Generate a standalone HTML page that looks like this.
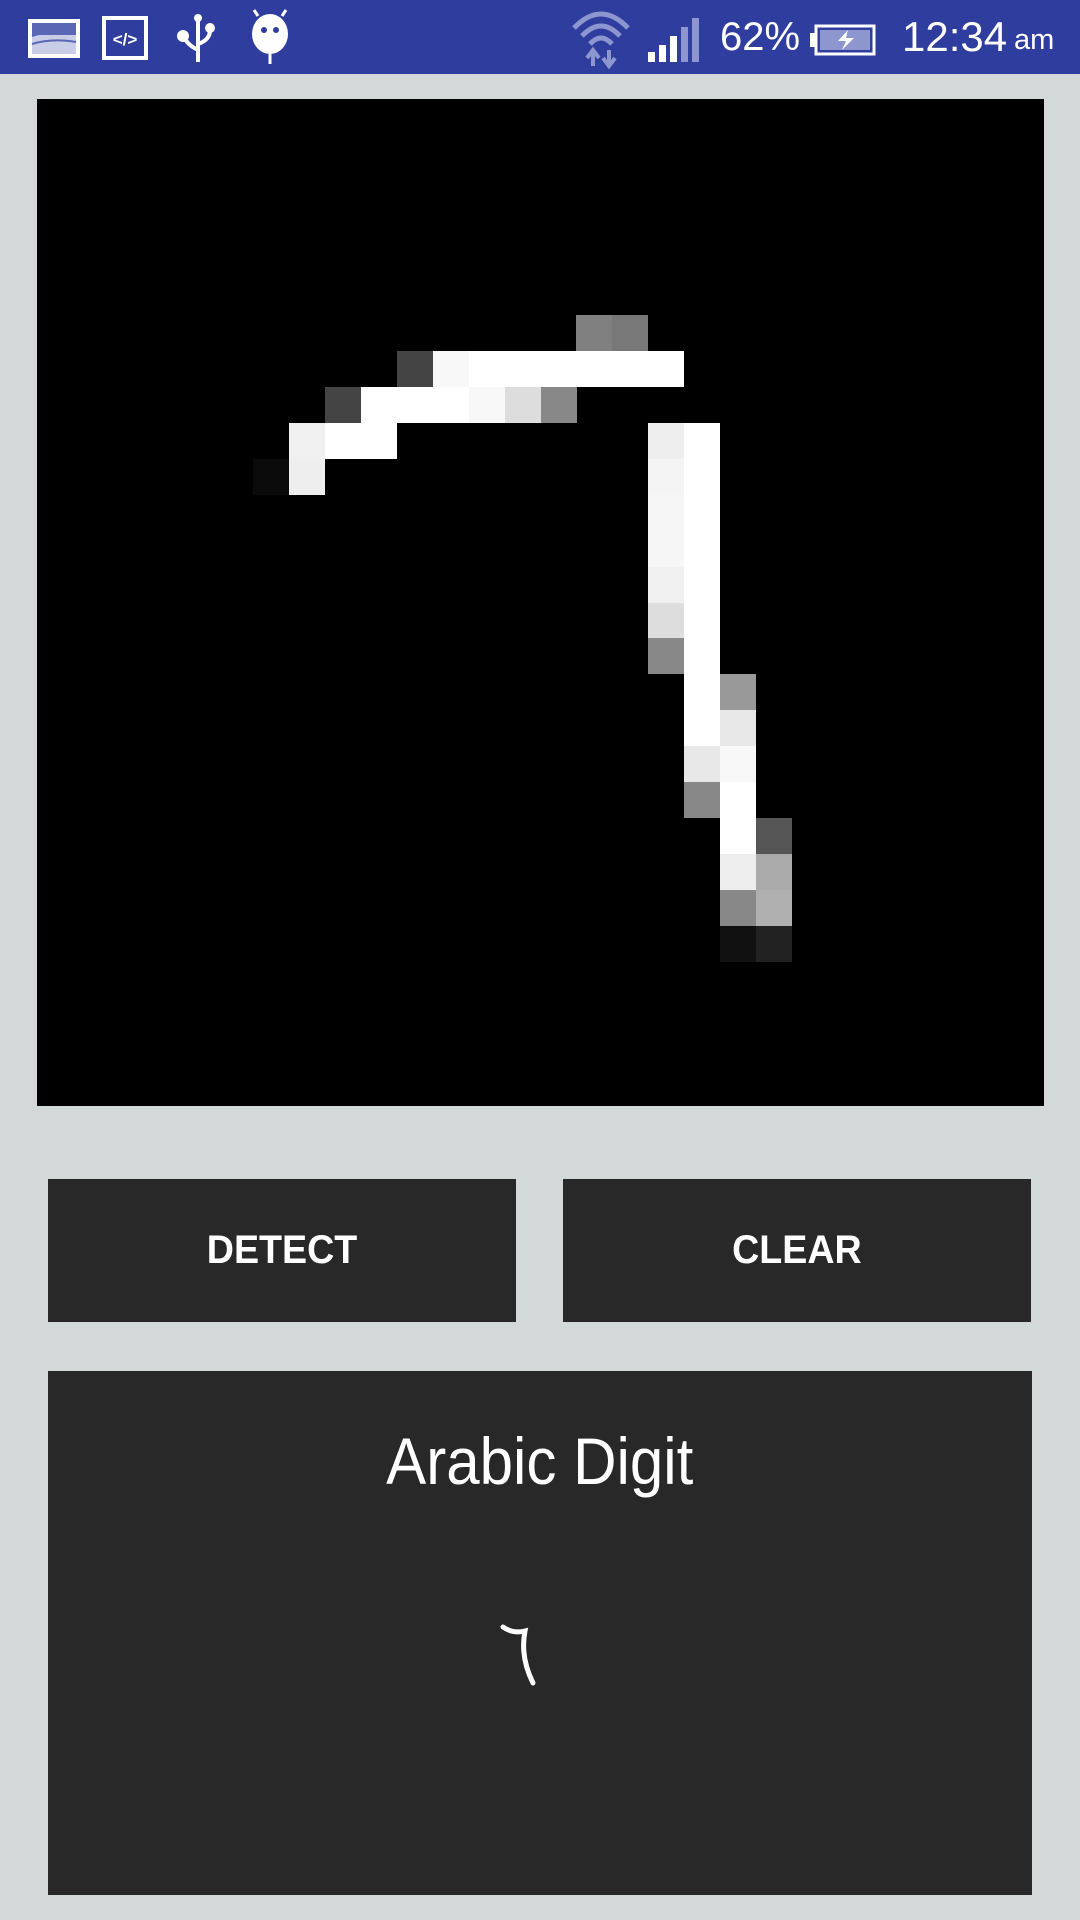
<!DOCTYPE html>
<html><head><meta charset="utf-8"><style>
*{margin:0;padding:0;box-sizing:border-box}
body{width:1080px;height:1920px;background:#d3d8d8;position:relative;overflow:hidden;font-family:"Liberation Sans","DejaVu Sans",sans-serif}
.sb{position:absolute;left:0;top:0;width:1080px;height:74px;background:#2f3e9e}
.canvas{position:absolute;left:37px;top:99px;width:1007px;height:1007px;background:#000}
.c{position:absolute;width:36px;height:36px}
.btn{position:absolute;top:1179px;height:143px;width:468px;background:#282828;color:#fff;font-weight:bold;font-size:40px;display:flex;align-items:center;justify-content:center}
.res{position:absolute;left:48px;top:1371px;width:984px;height:524px;background:#282828}
.t{position:absolute;color:#fff;white-space:nowrap}
</style></head><body>
<div class="sb">
<svg width="1080" height="74" style="position:absolute;left:0;top:0">
 <rect x="28" y="19" width="52" height="39" fill="#fff"/>
 <rect x="32" y="23" width="44" height="31" fill="#c9cde8"/>
 <rect x="32" y="23" width="44" height="12" fill="#5a67b5"/>
 <path d="M32 36 Q50 30 76 34 M32 44 Q52 38 76 42" stroke="#5a67b5" stroke-width="2" fill="none"/>
 <rect x="104" y="18" width="42" height="40" fill="none" stroke="#fff" stroke-width="4"/>
 <text x="125" y="45" fill="#fff" font-size="17" font-weight="bold" text-anchor="middle" font-family="Liberation Sans">&lt;/&gt;</text>
 <path d="M198 18 V62 M198 50 Q186 44 184 36 M198 44 Q210 40 210 30" stroke="#fff" stroke-width="4" fill="none"/>
 <circle cx="198" cy="18" r="4" fill="#fff"/><circle cx="183" cy="36" r="6" fill="#fff"/><circle cx="210" cy="28" r="5" fill="#fff"/>
 <ellipse cx="270" cy="34" rx="18" ry="20" fill="#fff"/>
 <path d="M258 16 L254 10 M282 16 L286 10 M270 54 V64" stroke="#fff" stroke-width="3"/>
 <circle cx="264" cy="30" r="3" fill="#2f3e9e"/><circle cx="276" cy="30" r="3" fill="#2f3e9e"/>
 <path d="M574 28 Q601 0 628 28 M582 36 Q601 16 620 36 M590 44 Q601 32 612 44" stroke="#8d96cf" stroke-width="5" fill="none"/>
 <path d="M593 66 V52 M587 58 L593 50 L599 58 M609 50 V64 M603 58 L609 66 L615 58" stroke="#8d96cf" stroke-width="4" fill="none"/>
 <rect x="648" y="52" width="7" height="10" fill="#fff"/><rect x="659" y="45" width="7" height="17" fill="#fff"/><rect x="670" y="36" width="7" height="26" fill="#fff"/><rect x="681" y="27" width="7" height="35" fill="#8d96cf"/><rect x="692" y="18" width="7" height="44" fill="#8d96cf"/>
 <rect x="816" y="26" width="58" height="28" fill="none" stroke="#fff" stroke-width="3"/>
 <rect x="810" y="33" width="6" height="14" fill="#fff"/>
 <rect x="820" y="30" width="50" height="20" fill="#8d96cf"/>
 <path d="M848 30 L838 41 H846 L842 50 L854 38 H846 Z" fill="#fff"/>
</svg>
<div class="t" style="left:720px;top:15px;font-size:40px">62%</div>
<div class="t" style="left:902px;top:13px;font-size:42px">12:34</div>
<div class="t" style="left:1014px;top:24px;font-size:29px">am</div>
</div>
<div class="canvas" id="cv"></div>
<div class="btn" style="left:48px"><span style="display:inline-block;transform:scaleX(.94)">DETECT</span></div>
<div class="btn" style="left:563px"><span style="display:inline-block;transform:scaleX(.94)">CLEAR</span></div>
<div class="res"></div>
<div class="t" style="left:0;width:1080px;text-align:center;top:1428px;font-size:66px;line-height:1"><span style="display:inline-block;transform:scaleX(.91)">Arabic Digit</span></div>
<svg width="1080" height="1920" style="position:absolute;left:0;top:0;pointer-events:none">
 <path d="M503 1627 Q513 1634 525 1631 Q520 1657 533 1683" stroke="#fff" stroke-width="5" fill="none" stroke-linecap="round"/>
</svg>
<script>
var px=[[6,15,'#808080'],[6,16,'#787878'],
[7,10,'#444'],[7,11,'#f8f8f8'],[7,12,'#fff'],[7,13,'#fff'],[7,14,'#fff'],[7,15,'#fff'],[7,16,'#fff'],[7,17,'#fff'],
[8,8,'#444'],[8,9,'#fff'],[8,10,'#fff'],[8,11,'#fff'],[8,12,'#f8f8f8'],[8,13,'#ddd'],[8,14,'#888'],
[9,7,'#f0f0f0'],[9,8,'#fff'],[9,9,'#fff'],[9,17,'#eee'],[9,18,'#fff'],
[10,6,'#0a0a0a'],[10,7,'#eee'],[10,17,'#f4f4f4'],[10,18,'#fff'],
[11,17,'#f6f6f6'],[11,18,'#fff'],[12,17,'#f6f6f6'],[12,18,'#fff'],
[13,17,'#f0f0f0'],[13,18,'#fff'],[14,17,'#ddd'],[14,18,'#fff'],
[15,17,'#888'],[15,18,'#fff'],[16,18,'#fff'],[16,19,'#999'],
[17,18,'#fff'],[17,19,'#e8e8e8'],[18,18,'#e8e8e8'],[18,19,'#f8f8f8'],
[19,18,'#888'],[19,19,'#fff'],[20,19,'#fff'],[20,20,'#555'],
[21,19,'#eee'],[21,20,'#aaa'],[22,19,'#888'],[22,20,'#b0b0b0'],[23,19,'#111'],[23,20,'#222']];
var cv=document.getElementById('cv'),s=1007/28,h='';
px.forEach(function(p){h+='<div class="c" style="left:'+Math.round(p[1]*s)+'px;top:'+Math.round(p[0]*s)+'px;background:'+p[2]+'"></div>'});
cv.innerHTML=h;
</script>
</body></html>
